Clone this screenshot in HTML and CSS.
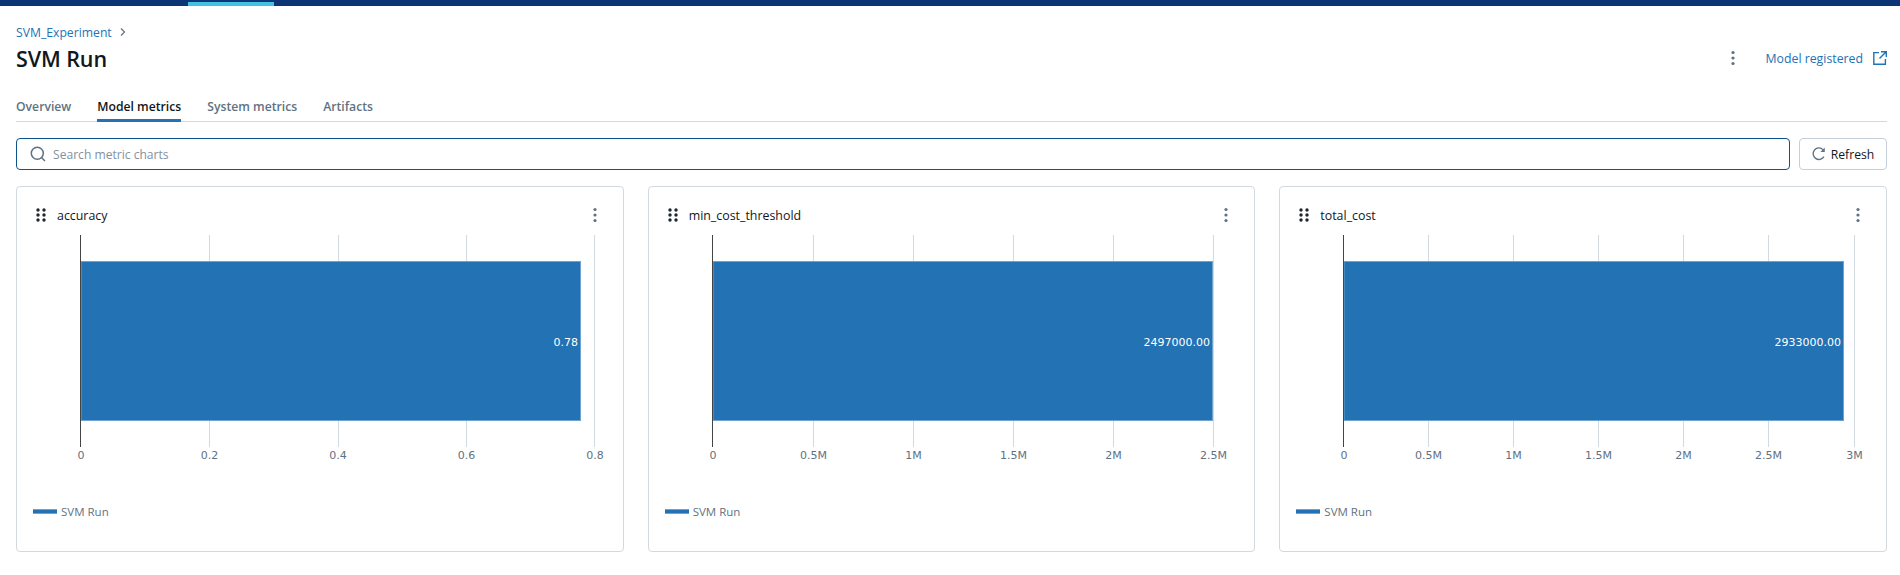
FILE: index.html
```html
<!DOCTYPE html>
<html lang="en">
<head>
  <meta charset="UTF-8" />
  <title>SVM Run</title>
  <link rel="stylesheet" href="styles.css">
</head>
<body>
  <div class="top-bar"><div class="top-bar-active"></div></div>

  <main>
    <div class="breadcrumb">
      <a href="#">SVM_Experiment</a>
      <svg class="chevron" viewBox="0 0 8 10" width="8" height="10"><path d="M2 1.5 5.5 5 2 8.5" fill="none" stroke="#5f7281" stroke-width="1.2"/></svg>
    </div>

    <div class="title-row">
      <h1>SVM Run</h1>
      <div class="title-actions">
        <svg class="kebab" viewBox="0 0 4 16" width="4" height="16"><circle cx="2" cy="2.5" r="1.6"/><circle cx="2" cy="8" r="1.6"/><circle cx="2" cy="13.5" r="1.6"/></svg>
        <a class="registered" href="#">Model registered
          <svg viewBox="0 0 14 14" width="14" height="14"><path d="M6 1.6H.8v11.6h11.6V8M8 .7h5.3V6M13.2.8 6.5 7.5" fill="none" stroke="#2272b4" stroke-width="1.4"/></svg>
        </a>
      </div>
    </div>

    <nav class="tabs">
      <a href="#">Overview</a>
      <a href="#" class="active">Model metrics</a>
      <a href="#">System metrics</a>
      <a href="#">Artifacts</a>
    </nav>

    <div class="toolbar">
      <label class="search">
        <svg viewBox="0 0 16 16" width="16" height="16"><circle cx="7.3" cy="7.3" r="6" fill="none" stroke="#5f7281" stroke-width="1.5"/><path d="M11.5 11.5 15 15" stroke="#5f7281" stroke-width="1.5"/></svg>
        <input type="text" placeholder="Search metric charts" />
      </label>
      <button class="refresh">
        <svg viewBox="0 0 16 16" width="14" height="14"><path d="M13.6 11A6.6 6.6 0 1 1 12.6 3" fill="none" stroke="#5f7281" stroke-width="1.5"/><path d="M14.6 .6v5h-5z" fill="#5f7281"/></svg>
        Refresh
      </button>
    </div>

    <section class="cards">
      <article class="card">
        <header class="card-head">
          <svg class="grip" viewBox="0 0 10 14" width="10" height="14"><circle cx="2" cy="2" r="1.7"/><circle cx="8" cy="2" r="1.7"/><circle cx="2" cy="7" r="1.7"/><circle cx="8" cy="7" r="1.7"/><circle cx="2" cy="12" r="1.7"/><circle cx="8" cy="12" r="1.7"/></svg>
          <span class="card-title">accuracy</span>
          <svg class="kebab" viewBox="0 0 4 16" width="4" height="16"><circle cx="2" cy="2.5" r="1.6"/><circle cx="2" cy="8" r="1.6"/><circle cx="2" cy="13.5" r="1.6"/></svg>
        </header>
        <svg class="plot" width="605" height="232">
          <g class="grid"><path d="M192.5 0V26M192.5 186V212M321.5 0V26M321.5 186V212M449.5 0V26M449.5 186V212M577.5 0V212"/></g>
          <rect class="bar" x="64" y="26.500" width="499.500" height="159"/>
          <path class="axis" d="M63.500 0V212"/>
          <text class="bar-label" x="561" y="111">0.78</text>
          <g class="ticks">
            <text x="64" y="224">0</text><text x="192.500" y="224">0.2</text><text x="321" y="224">0.4</text><text x="449.500" y="224">0.6</text><text x="578" y="224">0.8</text>
          </g>
        </svg>
        <div class="legend"><i></i>SVM Run</div>
      </article>

      <article class="card">
        <header class="card-head">
          <svg class="grip" viewBox="0 0 10 14" width="10" height="14"><circle cx="2" cy="2" r="1.7"/><circle cx="8" cy="2" r="1.7"/><circle cx="2" cy="7" r="1.7"/><circle cx="8" cy="7" r="1.7"/><circle cx="2" cy="12" r="1.7"/><circle cx="8" cy="12" r="1.7"/></svg>
          <span class="card-title">min_cost_threshold</span>
          <svg class="kebab" viewBox="0 0 4 16" width="4" height="16"><circle cx="2" cy="2.5" r="1.6"/><circle cx="2" cy="8" r="1.6"/><circle cx="2" cy="13.5" r="1.6"/></svg>
        </header>
        <svg class="plot" width="605" height="232">
          <g class="grid"><path d="M164.5 0V26M164.500 186V212M264.500 0V26M264.500 186V212M364.500 0V26M364.500 186V212M464.500 0V26M464.500 186V212M564.500 0V212"/></g>
          <rect class="bar" x="64" y="26.500" width="499.500" height="159"/>
          <path class="axis" d="M63.500 0V212"/>
          <text class="bar-label" x="561" y="111">2497000.00</text>
          <g class="ticks">
            <text x="64" y="224">0</text><text x="164.500" y="224">0.5M</text><text x="264.500" y="224">1M</text><text x="364.500" y="224">1.5M</text><text x="464.500" y="224">2M</text><text x="564.500" y="224">2.5M</text>
          </g>
        </svg>
        <div class="legend"><i></i>SVM Run</div>
      </article>

      <article class="card">
        <header class="card-head">
          <svg class="grip" viewBox="0 0 10 14" width="10" height="14"><circle cx="2" cy="2" r="1.7"/><circle cx="8" cy="2" r="1.7"/><circle cx="2" cy="7" r="1.7"/><circle cx="8" cy="7" r="1.7"/><circle cx="2" cy="12" r="1.7"/><circle cx="8" cy="12" r="1.7"/></svg>
          <span class="card-title">total_cost</span>
          <svg class="kebab" viewBox="0 0 4 16" width="4" height="16"><circle cx="2" cy="2.5" r="1.6"/><circle cx="2" cy="8" r="1.6"/><circle cx="2" cy="13.5" r="1.6"/></svg>
        </header>
        <svg class="plot" width="605" height="232">
          <g class="grid"><path d="M148.5 0V26M148.500 186V212M233.500 0V26M233.500 186V212M318.500 0V26M318.500 186V212M403.500 0V26M403.500 186V212M488.500 0V26M488.500 186V212M574.500 0V212"/></g>
          <rect class="bar" x="64" y="26.500" width="499.500" height="159"/>
          <path class="axis" d="M63.500 0V212"/>
          <text class="bar-label" x="561" y="111">2933000.00</text>
          <g class="ticks">
            <text x="64" y="224">0</text><text x="148.500" y="224">0.5M</text><text x="233.500" y="224">1M</text><text x="318.500" y="224">1.5M</text><text x="403.500" y="224">2M</text><text x="488.500" y="224">2.5M</text><text x="574.500" y="224">3M</text>
          </g>
        </svg>
        <div class="legend"><i></i>SVM Run</div>
      </article>
    </section>
  </main>
</body>
</html>
```

FILE: styles.css
```css
body {
  font-family: 'Open Sans', 'Noto Sans', sans-serif;
  background: #fff;
  margin: 0;
  color: #11171c;
  overflow: hidden;
}
a {
  text-decoration: none;
}
.top-bar {
  height: 6px;
  background: #0b3574;
}
.top-bar-active {
  width: 86px;
  height: 4px;
  margin-left: 188px;
  position: relative;
  top: 2px;
  background: #42c0e8;
}
main {
  padding: 17px 13px 0 16px;
}
.breadcrumb {
  display: flex;
  align-items: center;
  gap: 7px;
  height: 18px;
  font-size: 12.200px;
}
.breadcrumb a {
  color: #2272b4;
}
.title-row {
  display: flex;
  justify-content: space-between;
  align-items: center;
  height: 32px;
  margin-top: 1px;
}
h1 {
  margin: 0;
  font-size: 21.500px;
  font-weight: 600;
  letter-spacing: -0.1px;
}
.title-actions {
  display: flex;
  align-items: center;
  gap: 31px;
}
.kebab {
  fill: #5f7281;
  flex: none;
}
.registered {
  display: flex;
  align-items: center;
  gap: 10px;
  color: #2272b4;
  font-size: 12.300px;
}
.tabs {
  display: flex;
  gap: 26px;
  height: 33px;
  margin-top: 15px;
  box-sizing: border-box;
  border-bottom: 1px solid #d1d9e1;
}
.tabs a {
  padding-top: 9px;
  height: 33px;
  box-sizing: border-box;
  font-size: 12.200px;
  font-weight: 600;
  color: #5f7281;
}
.tabs a.active {
  color: #11171c;
  border-bottom: 3px solid #2272b4;
}
.toolbar {
  display: flex;
  gap: 9px;
  margin-top: 16px;
}
.search {
  flex: 1;
  display: flex;
  align-items: center;
  gap: 7px;
  height: 32px;
  box-sizing: border-box;
  padding-left: 13px;
  border: 1px solid #0e538b;
  border-radius: 4px;
}
.search input {
  flex: 1;
  border: none;
  outline: none;
  padding: 0;
  font-family: inherit;
  font-size: 12.100px;
}
.search input::placeholder {
  color: #82929f;
  opacity: 1;
}
.refresh {
  display: flex;
  align-items: center;
  justify-content: center;
  gap: 5px;
  width: 88px;
  height: 32px;
  padding: 0;
  background: #fff;
  border: 1px solid #c4cfd9;
  border-radius: 4px;
  font-family: inherit;
  font-size: 12.200px;
  color: #11171c;
}
.cards {
  display: grid;
  grid-template-columns: repeat(3, 1fr);
  gap: 24px;
  margin-top: 16px;
}
.card {
  height: 366px;
  box-sizing: border-box;
  border: 1px solid #d1d9e1;
  border-radius: 4px;
}
.card-head {
  display: flex;
  align-items: center;
  height: 48px;
  box-sizing: border-box;
  padding: 8px 26px 0 19px;
}
.grip {
  fill: #1f272d;
  flex: none;
}
.card-title {
  flex: 1;
  margin-left: 11px;
  font-size: 12.400px;
  font-weight: 500;
  color: #11171c;
}
.plot {
  display: block;
}
.grid path {
  stroke: #d1d9e1;
  fill: none;
}
.axis {
  stroke: #444;
  fill: none;
}
.bar {
  fill: #2272b4;
  stroke: #6ea3cf;
  stroke-width: 1;
}
.bar-label {
  font-family: 'DejaVu Sans', Verdana, sans-serif;
  font-size: 11px;
  fill: #fff;
  text-anchor: end;
}
.ticks text {
  font-family: 'DejaVu Sans', Verdana, sans-serif;
  font-size: 11px;
  fill: #5f7281;
  text-anchor: middle;
}
.legend {
  display: flex;
  align-items: center;
  gap: 4px;
  margin: 37px 0 0 16px;
  font-size: 11.500px;
  color: #5f7281;
}
.legend i {
  width: 24px;
  height: 5px;
  background: #2272b4;
  border-top: 1px solid #6ea3cf;
  border-bottom: 1px solid #6ea3cf;
  box-sizing: border-box;
}
```
